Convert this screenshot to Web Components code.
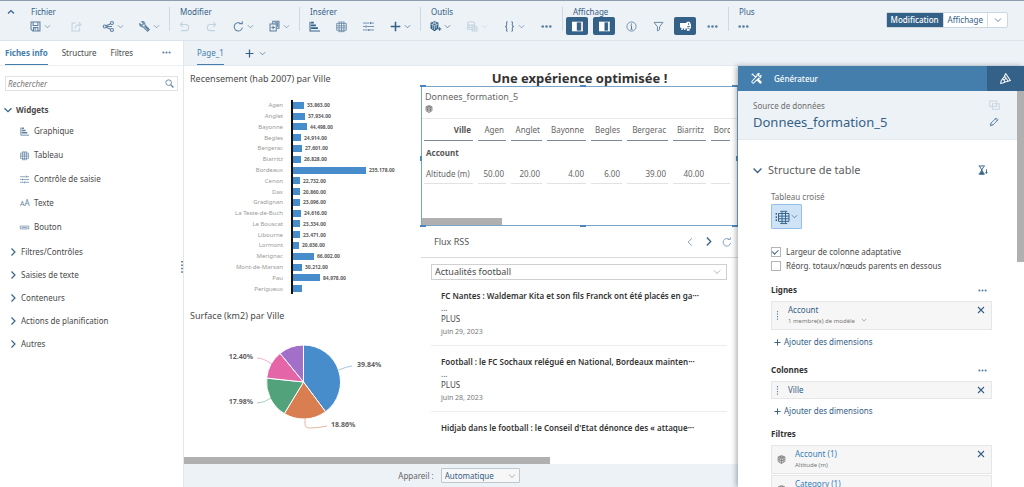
<!DOCTYPE html>
<html lang="fr">
<head>
<meta charset="utf-8">
<title>Page_1</title>
<style>
  :root {
    --blue: #346187; --mid: #5c7f9f; --accent: #437ead; --ink: #4a4a4a; --soft: #6e6e6e;
    --shell: #edf2f7; --line: #dbe4ec; --bar: #b0b0b0;
  }
  html, body { margin: 0; height: 100%; overflow: hidden; }
  body { font: 8px/12px "Noto Sans", "Open Sans", sans-serif; color: var(--ink); background: #fff; }
</style>
</head>
<body>
<app-shell></app-shell>
<script>
const BASE = `*{box-sizing:border-box}
button{font:inherit;color:inherit;background:none;border:0;padding:0;margin:0;cursor:pointer}
h1,h2,h3,p,ul{margin:0;padding:0;list-style:none}
select,input{font:inherit;color:inherit;margin:0}`;

function define(name, css, html, setup) {
  const template = document.createElement('template');
  template.innerHTML = `<style>${BASE}${css}</style>${html}`;
  customElements.define(name, class extends HTMLElement {
    connectedCallback() {
      if (this.shadowRoot) return;
      this.attachShadow({ mode: 'open' }).append(template.content.cloneNode(true));
      if (setup) setup.call(this, this.shadowRoot);
    }
  });
}

/* 16-unit line icons */
const ICONS = {
  down: '<path d="M2 5l6 6 6-6"/>',
  downbold: '<path d="M1 4.500l7 7 7-7" stroke-width="2.300"/>',
  rightbold: '<path d="M5 1l7 7-7 7" stroke-width="2.300"/>',
  up: '<path d="M2 11l6-6 6 6" stroke-width="2.4"/>',
  left: '<path d="M11 2L5 8l6 6"/>',
  save: '<path d="M1.500 1.500h13v13H4l-2.500-2.500zM4.500 1.500v5h7v-5M5 14.500v-5h6.500v5M7.500 10v3"/>',
  export: '<path d="M7 3H1.500v11.500h11V10M6 11c0-4 3-6 8-6M11 1.500L14.500 5 11 8.500"/>',
  share: '<circle cx="2.500" cy="8" r="2.200"/><circle cx="13" cy="3" r="2.200"/><circle cx="13" cy="13" r="2.200"/><path d="M4.500 7L11 4M4.500 9l6.500 3M5 8h8"/>',
  wrench: '<path d="M1 4l3.500 2.500L6.500 4 4 1c3-.5 5 1.500 4.500 4.500L15 12.500 12.500 15 6 8.500C3.500 9 .5 7 1 4zM8 7.500l5.500 5.500"/>',
  undo: '<path d="M2.500 5H10c5.500 0 5.500 9 0 9H3M5.500 1.500L2 5l3.500 3.500"/>',
  redo: '<path d="M13.500 5H6C.5 5 .5 14 6 14h7M10.500 1.500L14 5l-3.500 3.500"/>',
  refresh: '<path d="M13.700 9.500A6 6 0 1 1 11.500 3.800M9 3.800h4.500V.5"/>',
  copy: '<path d="M5.500 3.500v-3h9v10h-3M1.500 4.500h9v10h-9zM6 7v5M3.500 9.500h5M8 2.500h4.500v6"/>',
  chart: '<path d="M1.500 1v13.500H16" /><path fill="currentColor" stroke="none" d="M3 1h4v2.500H3zM3 5h7v2.500H3zM3 9h10v2.500H3z"/>',
  grid: '<path stroke-width="1.100" d="M1 3.500h14v10H1zM1 7h14M1 10h14M4.500 2v13M8 2v13M11.500 2v13M3.500 1.500h9M3.500 15.500h9"/>',
  sliders: '<path stroke-width="1.200" d="M0 3h9M12 3h4M0 8h3M6 8h10M0 13h7M10 13h6"/><path d="M11 1.500v3M4.500 6.500v3M8.500 11.500v3" stroke-width="2"/>',
  plus: '<path d="M8 1v14M1 8h14" stroke-width="2.200"/>',
  cube: '<path stroke-width="1.400" d="M8 1l6 2.500v8L8 15l-6-3.500v-8zM2 3.500L8 6.500l6-3M8 6.500V15M5 2.300l6 2.700v8M11 2.300L5 5v8M2 7.500l6 3 6-3"/>',
  cubeplus: '<path fill="currentColor" d="M6.500 1l5 2v7.500l-5 3.500-5-3.500V3z"/><path stroke="#edf2f7" stroke-width=".9" d="M1.500 4.500l5 2 5-2M6.500 6.500V13M4 2l5 2v7M9 2L4 4v8"/><path d="M14 9v5M11.500 11.500h5"/>',
  database: '<path d="M1 3c0-2.500 10-2.500 10 0v9H1zM1 6h10M1 9h6M7.500 8.500h7v6h-7zM9 11.500h4"/>',
  braces: '<path d="M5.500 1C2.500 1 4 3 4 5s-.5 3-2.500 3c2 0 2.500 1 2.500 3s-1.500 4 1.500 4M10.500 1c3 0 1.500 2 1.500 4s.5 3 2.500 3c-2 0-2.500 1-2.500 3s1.500 4-1.500 4"/>',
  dots: '<g fill="currentColor" stroke="none"><circle cx="2.500" cy="8" r="1.900"/><circle cx="8" cy="8" r="1.900"/><circle cx="13.500" cy="8" r="1.900"/></g>',
  panel1: '<path fill="#fff" stroke="none" d="M0 1h16v14H0z"/><path fill="#346187" stroke="none" d="M7 2h6v12H7z"/><path stroke="#c98d8d" stroke-width="1" d="M14.500 2v12"/>',
  panel2: '<path fill="#fff" stroke="none" d="M0 1h16v14H0z"/><path fill="#346187" stroke="none" d="M8 2h5v12H8z"/><path stroke="#8cb8de" stroke-width="1" d="M15 2v12"/>',
  info: '<circle cx="8" cy="8" r="6.700" stroke-width="1.200"/><path d="M8 7v5M6.500 7H8M6.500 12h3M8 3.700v1.600"/>',
  filter: '<path stroke-width="1.300" d="M1.500 2h13L9.500 8.500v4l-3 2v-6z"/>',
  route: '<path fill="#fff" stroke="none" d="M0 3h9l1-2h4l2 4v6h-2v3h-4v-3H8v2H6v-2H4v2H2v-3L0 9z"/><path stroke="#346187" stroke-width="1.200" d="M12.500 3v3M10.500 8h4M10.500 10.500h3"/>',
  tools: '<path d="M2 1.500l5 5M9.500 9l5 5M1 3l2-2M8.500 9.500l5 5.300 1.500-1.500-5-5M14.500 3.500L12 5l-1.500-1.500L12 1c-2-.5-4 1-3.500 3.500L1.500 12c-1 1.500 1 3.500 2.500 2.500l7.500-7c2 .5 3.500-2 3-4z"/>',
  paint: '<path d="M8.500 1L15 11l-3 1L6.500 4zM7 4.500L4 8l3.500 5L12 12M4 8l-2.500 4L1 15l3-.5L7.500 13M9.500 7L6 10"/>',
  duplicate: '<path d="M1 1.500h10v8H1zM5 5.500h10v8H5z"/>',
  pencil: '<path d="M2 14l1-4L11.500 1.500l3 3L6 13zM10 3l3 3M3 10l3 3"/>',
  hourglass: '<path d="M1 1.500h10M1 14.500h10M2.500 2l3.500 6-3.500 6M9.500 2L6 8l3.500 6M13.500 7v6M12 11.500l1.500 2 1.500-2"/><path fill="currentColor" stroke="none" d="M6 9l4 6H2z"/>',
  crosstab: '<path stroke-width="1.100" d="M4 4h12v9H4zM4 7h12M4 10h12M8 2v13M12 2v13M6 1.500h8M6 15.500h8"/><path stroke-dasharray="2 1.500" d="M1.500 3.500v10"/>',
  button: '<path d="M.5 5.500h15v5H.5zM3 8h10" stroke-width="1.200"/>',
  search: '<circle cx="6.500" cy="6.500" r="5"/><path d="M10 10l5 5" stroke-width="2.200"/>',
  close: '<path d="M2 2l12 12M14 2L2 14" stroke-width="2.200"/>',
  grip: '<g fill="currentColor" stroke="none"><path d="M7 0h2v2H7zM7 4.500h2v2H7zM7 9h2v2H7zM7 13.500h2v2H7z"/></g>'
};

define('ui-icon',
  ':host{display:inline-flex;flex:none}svg{display:block;overflow:visible}',
  '<svg viewBox="0 0 16 16" fill="none" stroke="currentColor" stroke-width="1.5" aria-hidden="true"></svg>',
  function (root) {
    const svg = root.querySelector('svg');
    const size = this.getAttribute('size') || 11;
    svg.setAttribute('width', size);
    svg.setAttribute('height', size);
    svg.innerHTML = ICONS[this.getAttribute('name')];
  });

define('tool-button',
  `:host{display:block;color:var(--mid)}
   button{display:flex;align-items:center;justify-content:center;width:22px;height:18px;border-radius:2px}
   :host([menu]) button{width:31px;gap:3px;padding-left:2px}
   :host([wide]) button{width:32px}
   :host([strong]){color:var(--blue)}
   :host([faint]){color:#c3d2df}
   :host([on]) button{background:var(--blue)}
   .more{display:none}:host([menu]) .more{display:flex}`,
  '<button type="button"><ui-icon></ui-icon><ui-icon class="more" name="down" size="7"></ui-icon></button>',
  function (root) {
    const icon = root.querySelector('ui-icon');
    icon.replaceWith(Object.assign(document.createElement('template'),
      { innerHTML: `<ui-icon name="${this.getAttribute('icon')}"></ui-icon>` }).content);
    root.querySelector('button').setAttribute('aria-label', this.getAttribute('icon'));
  });

define('tool-group',
  `:host{display:flex;flex-direction:column;position:relative;padding:5px 6px 0 3px}
   :host(:not([last]))::after{content:"";position:absolute;right:0;top:6px;bottom:9px;width:1px;background:#cfd9e3}
   h2{font-size:8px;line-height:11px;font-weight:400;color:var(--blue);padding-left:7px}
   .row{display:flex;gap:5px}:host([loose]) .row{gap:6px}`,
  '<h2></h2><div class="row"><slot></slot></div>',
  function (root) { root.querySelector('h2').textContent = this.getAttribute('label'); });

define('app-toolbar',
  `:host{display:flex;height:41px;flex:none;background:var(--shell);border-top:1px solid #8f9db1;border-bottom:1px solid var(--line)}
   .fold{width:21px;height:21px;display:flex;align-items:center;justify-content:center;color:var(--blue)}
   .mode{display:flex;margin:11px 16px auto auto;height:16px;border:1px solid #cdd6de;border-radius:2px;background:#fff;color:var(--blue);font-size:8px;line-height:14px}
   .mode button{padding:0 4px}
   .mode button+button{border-left:1px solid #d5dce3}
   .mode .on{background:var(--blue);color:#fff;font-weight:500}
   .mode .menu{width:20px;display:flex;align-items:center;justify-content:center}`,
  `<button class="fold" type="button" aria-label="Replier"><ui-icon name="up" size="8"></ui-icon></button>
   <tool-group label="Fichier"><tool-button icon="save" menu></tool-button><tool-button icon="export" wide faint></tool-button><tool-button icon="share" menu></tool-button><tool-button icon="wrench" menu></tool-button></tool-group>
   <tool-group label="Modifier"><tool-button icon="undo" faint></tool-button><tool-button icon="redo" faint></tool-button><tool-button icon="refresh" menu></tool-button><tool-button icon="copy" menu></tool-button></tool-group>
   <tool-group label="Insérer"><tool-button icon="chart" strong></tool-button><tool-button icon="grid"></tool-button><tool-button icon="sliders"></tool-button><tool-button icon="plus" menu strong></tool-button></tool-group>
   <tool-group label="Outils" loose><tool-button icon="cubeplus" menu strong></tool-button><tool-button icon="database" menu faint></tool-button><tool-button icon="braces" menu></tool-button><tool-button icon="dots"></tool-button></tool-group>
   <tool-group label="Affichage"><tool-button icon="panel1" on></tool-button><tool-button icon="panel2" on></tool-button><tool-button icon="info"></tool-button><tool-button icon="filter"></tool-button><tool-button icon="route" on></tool-button><tool-button icon="dots"></tool-button></tool-group>
   <tool-group label="Plus" last><tool-button icon="dots"></tool-button></tool-group>
   <div class="mode"><button class="on" type="button">Modification</button><button type="button">Affichage</button><button class="menu" type="button" aria-label="Options"><ui-icon name="down" size="8"></ui-icon></button></div>`);

define('side-panel',
  `:host{display:flex;flex-direction:column;width:184px;flex:none;border-right:1px solid #e3e7eb;position:relative;background:#fff}
   nav{display:flex;gap:14px;height:25px;padding:0 12px 0 5px;border-bottom:1px solid #edf0f3}
   nav button{border-bottom:1px solid transparent}
   nav .on{color:var(--accent);font-weight:700;border-color:var(--accent)}
   nav .more{margin-left:auto;color:var(--mid);display:flex;align-items:center}
   .search{display:flex;align-items:center;margin:10px 5px 0;height:15px;border:1px solid #e2e2e2;padding:0 3px 0 2px;color:var(--mid)}
   input{flex:1;min-width:0;border:0;outline:0;padding:0;background:none;font-style:italic}
   input::placeholder{color:#777;opacity:1}
   .root{display:flex;align-items:center;gap:4px;height:18px;margin-top:10px;padding-left:4px;font-weight:700}
   .root ui-icon,.group ui-icon{color:var(--blue)}
   li button{display:flex;align-items:center;width:100%}
   .leaf{gap:5px;height:24px;padding-left:20px}
   .leaf ui-icon{color:var(--mid)}
   .leaf .aa{width:9px;color:var(--mid);font-size:7px}
   .leaf big{font-size:8px}
   .group{gap:4px;height:23px;padding-left:9px}
   .groups{margin-top:1px}
   .grip{position:absolute;right:-5px;top:220px;color:var(--blue)}`,
  `<nav><button class="on" type="button">Fiches info</button><button type="button">Structure</button><button type="button">Filtres</button><button class="more" type="button" aria-label="Plus"><ui-icon name="dots" size="9"></ui-icon></button></nav>
   <label class="search"><input type="text" placeholder="Rechercher" aria-label="Rechercher"><ui-icon name="search" size="9"></ui-icon></label>
   <button class="root" type="button"><ui-icon name="downbold" size="8"></ui-icon>Widgets</button>
   <ul>
    <li><button class="leaf" type="button"><ui-icon name="chart" size="9"></ui-icon>Graphique</button></li>
    <li><button class="leaf" type="button"><ui-icon name="grid" size="9"></ui-icon>Tableau</button></li>
    <li><button class="leaf" type="button"><ui-icon name="sliders" size="9"></ui-icon>Contrôle de saisie</button></li>
    <li><button class="leaf" type="button"><span class="aa">A<big>A</big></span>Texte</button></li>
    <li><button class="leaf" type="button"><ui-icon name="button" size="9"></ui-icon>Bouton</button></li>
   </ul>
   <ul class="groups">
    <li><button class="group" type="button"><ui-icon name="rightbold" size="8"></ui-icon>Filtres/Contrôles</button></li>
    <li><button class="group" type="button"><ui-icon name="rightbold" size="8"></ui-icon>Saisies de texte</button></li>
    <li><button class="group" type="button"><ui-icon name="rightbold" size="8"></ui-icon>Conteneurs</button></li>
    <li><button class="group" type="button"><ui-icon name="rightbold" size="8"></ui-icon>Actions de planification</button></li>
    <li><button class="group" type="button"><ui-icon name="rightbold" size="8"></ui-icon>Autres</button></li>
   </ul>
   <ui-icon class="grip" name="grip" size="12"></ui-icon>`);

define('page-tabs',
  `:host{display:flex;height:25px;flex:none;background:var(--shell);border-bottom:1px solid #e4eaf0;padding-left:13px;color:var(--accent)}
   .tab{border-bottom:1px solid var(--accent)}
   .add{display:flex;align-items:center;gap:5px;margin-left:21px;color:var(--blue)}`,
  `<button class="tab" type="button">Page_1</button>
   <button class="add" type="button" aria-label="Ajouter une page"><ui-icon name="plus" size="9"></ui-icon><ui-icon name="down" size="7"></ui-icon></button>`);

const POPULATION = [
  ['Agen', 33863], ['Anglet', 37934], ['Bayonne', 44498], ['Begles', 24914], ['Bergerac', 27601],
  ['Biarritz', 26828], ['Bordeaux', 235178], ['Cenon', 22732], ['Dax', 20860], ['Gradignan', 23096],
  ['La Teste-de-Buch', 24616], ['Le Bouscat', 23334], ['Libourne', 23471], ['Lormont', 20636],
  ['Merignac', 66002], ['Mont-de-Marsan', 30212], ['Pau', 84978], ['Perigueux', 29558, true]
];

define('bar-chart',
  `:host{display:block;height:237px;padding:6px 0 0 6px}
   h3{font-size:9px;line-height:13px;font-weight:400}
   .plot{display:grid;grid-template-rows:repeat(18,1fr);height:194px;margin-top:15px;overflow:hidden}
   .row{display:grid;grid-template-columns:93px 1fr;column-gap:8px;font-size:6px;line-height:10px}
   .name{text-align:right;color:#9a9a9a;align-self:center}
   .track{display:flex;align-items:center;gap:3px;border-left:2px solid #111}
   .bar{height:7px;background:#478ccb;flex:none}
   b{color:#5a5a5a;font-size:5px}`,
  '<h3>Recensement (hab 2007) par Ville</h3><div class="plot"></div>',
  function (root) {
    root.querySelector('.plot').innerHTML = POPULATION.map(([name, value, hidden]) =>
      `<div class="row"><span class="name">${name}</span><span class="track"><span class="bar" style="width:${Math.round(value / 3200)}px"></span>${hidden ? '' : `<b>${value.toLocaleString('en-US')}.00</b>`}</span></div>`).join('');
  });

define('pie-chart',
  `:host{display:block;padding:6px 0 0 6px}
   h3{font-size:9px;line-height:13px;font-weight:400}
   svg{display:block;margin:14px 0 0 -6px}
   text{font-size:7px;font-weight:700;fill:#5f5f5f}`,
  `<h3>Surface (km2) par Ville</h3>
   <svg width="236" height="100" viewBox="0 0 236 100" role="img" aria-label="Surface (km2) par Ville">
    <g class="slices" stroke="#fff" stroke-width="1"></g>
    <g fill="none" stroke-width=".8"><path stroke="#8ab4dd" d="M155 34q6-3 13-4"/><path stroke="#e0a587" d="M121 83v5q0 4 5 4 8 0 17-2"/><path stroke="#8cc1a8" d="M87 62q-7 5-14 5"/><path stroke="#ec9cc2" d="M88 28q-9-6-15-6"/></g>
    <text x="173" y="31">39.84%</text><text x="147" y="91">18.86%</text><text x="69" y="68" text-anchor="end">17.98%</text><text x="69" y="23" text-anchor="end">12.40%</text>
   </svg>`,
  function (root) {
    const parts = [[39.84, '#478ccb'], [18.86, '#d87e50'], [17.98, '#52a37c'], [12.4, '#e566a8'], [10.92, '#a26fc9']];
    const point = t => `${(119.5 + 37 * Math.sin(t)).toFixed(2)} ${(46 - 37 * Math.cos(t)).toFixed(2)}`;
    let angle = 0;
    root.querySelector('.slices').innerHTML = parts.map(([share, fill]) => {
      const from = angle;
      angle += share * Math.PI / 50;
      return `<path fill="${fill}" d="M119.5 46L${point(from)}A37 37 0 0 1 ${point(angle)}z"/>`;
    }).join('');
  });

define('data-table',
  `:host{display:block;position:relative;height:140px;border:1px solid #7ba4c8;background:#fff;color:#666}
   h3{font-size:9px;line-height:12px;font-weight:400;padding:4px 0 0 3px}
   .model{display:flex;padding:2px 0 0 3px;height:16px;border-bottom:1px solid #e8e8e8}
   .clip{overflow:hidden;margin-right:7px}
   table{table-layout:fixed;width:338px;border-collapse:separate;border-spacing:5px 0;margin-left:-3px;font-size:8px;line-height:11px}
   th,td{padding:0 2px;text-align:right;font-weight:400;white-space:nowrap}
   thead th{height:22px;border-bottom:1px solid #7d8894}
   thead th:first-child,.account{font-weight:700;color:#555}
   tbody th{text-align:left}
   .account{height:22px}
   tbody tr:last-child>*{height:21px;border-bottom:1px solid #e2e2e2}
   .scroll{position:absolute;left:0;bottom:0;width:80px;height:7px;background:var(--bar)}
   i{position:absolute;width:6px;height:2px;background:#4a86bb}
   .l{left:-2px}.r{right:-1px}.c{left:50%}.t{top:-2px}.b{bottom:-2px}.m{top:50%;width:2px;height:5px}`,
  `<h3>Donnees_formation_5</h3><div class="model"><ui-icon name="cube" size="8"></ui-icon></div>
   <div class="clip"><table>
    <colgroup><col style="width:49px"><col style="width:28px"><col style="width:31px"><col style="width:39px"><col style="width:31px"><col style="width:41px"><col style="width:33px"><col style="width:41px"></colgroup>
    <thead><tr><th>Ville</th><th>Agen</th><th>Anglet</th><th>Bayonne</th><th>Begles</th><th>Bergerac</th><th>Biarritz</th><th>Bordeaux</th></tr></thead>
    <tbody><tr><th class="account" colspan="8">Account</th></tr>
    <tr><th>Altitude (m)</th><td>50.00</td><td>20.00</td><td>4.00</td><td>6.00</td><td>39.00</td><td>40.00</td><td></td></tr></tbody>
   </table></div>
   <div class="scroll"></div>
   <i class="l t"></i><i class="c t"></i><i class="r t"></i><i class="l m"></i><i class="r m"></i><i class="l b"></i><i class="c b"></i><i class="r b"></i>`);

define('feed-item',
  `:host{display:block;height:66px;margin:0 11px 0 10px;padding:10px 0 0 10px;border-bottom:1px solid #ececec}
   :host([brief]){height:auto;border:0}
   h4{margin:0;font-size:8px;line-height:12px;font-weight:600;color:#333;white-space:nowrap}
   p{line-height:11px}
   small{display:block;font-size:7px;line-height:10px;color:#777;margin-top:3px}`,
  '<h4><slot></slot></h4><p>...</p><p>PLUS</p><small></small>',
  function (root) {
    if (this.hasAttribute('brief')) root.querySelectorAll('p,small').forEach(part => part.remove());
    else root.querySelector('small').textContent = this.getAttribute('date');
  });

define('rss-feed',
  `:host{display:block}
   header{display:flex;align-items:center;height:32px;border-bottom:1px solid #d9d9d9;padding:0 6px 0 13px}
   h3{font-size:9px;font-weight:400;margin-right:auto;color:#555}
   header button{display:flex;margin-left:9px;color:var(--blue)}
   header .dim{color:#7d9cb8}
   .pick{display:grid;align-items:center;margin:6px 11px 0 10px;height:16px;border:1px solid #d0d0d0;font-size:9px}
   .pick>*{grid-area:1/1}
   .pick ui-icon{justify-self:end;margin-right:5px;color:#8a9bab;pointer-events:none}
   select{appearance:none;border:0;background:none;padding:0 0 0 3px;height:14px}`,
  `<header><h3>Flux RSS</h3><button class="dim" type="button" aria-label="Précédent"><ui-icon name="left" size="10"></ui-icon></button><button type="button" aria-label="Suivant"><ui-icon name="rightbold" size="9"></ui-icon></button><button class="dim" type="button" aria-label="Actualiser"><ui-icon name="refresh" size="10"></ui-icon></button></header>
   <div class="pick"><select aria-label="Flux"><option>Actualités football</option></select><ui-icon name="down" size="8"></ui-icon></div>
   <feed-item date="juin 29, 2023">FC Nantes : Waldemar Kita et son fils Franck ont été placés en ga···</feed-item>
   <feed-item date="juin 28, 2023">Football : le FC Sochaux relégué en National, Bordeaux mainten···</feed-item>
   <feed-item brief>Hidjab dans le football : le Conseil d'Etat dénonce des « attaque···</feed-item>`);

define('story-canvas',
  `:host{display:flex;flex-direction:column;flex:1;min-width:0;min-height:0;background:#fff}
   .page{flex:1;min-height:0;overflow:hidden;display:grid;grid-template-columns:237px minmax(0,1fr)}
   h1{font-size:13px;line-height:20px;height:20px;padding-top:2px;text-align:center;font-weight:700;color:#333}
   .scroll{height:7px;width:66%;background:var(--bar);flex:none}
   footer{display:flex;align-items:center;justify-content:center;gap:7px;height:23px;flex:none;background:var(--shell);padding-right:4px;color:#666}
   .pick{display:grid;align-items:center;width:79px;height:15px;border:1px solid #bfc7ce;border-radius:1px;background:#f7f7f7;color:var(--blue)}
   .pick>*{grid-area:1/1}
   .pick ui-icon{justify-self:end;margin-right:3px;color:#8a9bab;pointer-events:none}
   select{appearance:none;border:0;background:none;padding:0 0 0 3px;height:13px}`,
  `<div class="page"><div><bar-chart></bar-chart><pie-chart></pie-chart></div>
   <div><h1>Une expérience optimisée !</h1><data-table></data-table><rss-feed></rss-feed></div></div>
   <div class="scroll"></div>
   <footer><label for="device">Appareil :</label><div class="pick"><select id="device"><option>Automatique</option></select><ui-icon name="down" size="8"></ui-icon></div></footer>`);

define('dimension-card',
  `:host{display:flex;align-items:flex-start;border:1px solid #e6e6e6;background:#f6f6f6;padding:2px 6px 2px 2px;color:var(--blue);line-height:12px}
   .lead{align-self:center;display:flex;justify-content:center;width:7px;margin-right:7px;color:var(--mid)}
   :host([filter]) .lead{width:15px;margin-right:6px;color:#777}
   :host([filter]) .text{color:#3580b8}
   :host([tall]){height:29px}
   .text{flex:1}
   button{display:flex;margin-top:2px}`,
  '<span class="lead"></span><div class="text"><slot></slot></div><button type="button" aria-label="Supprimer"><ui-icon name="close" size="8"></ui-icon></button>',
  function (root) {
    root.querySelector('.lead').innerHTML =
      `<ui-icon name="${this.hasAttribute('filter') ? 'cube' : 'grip'}" size="9"></ui-icon>`;
    if (this.hasAttribute('fixed')) root.querySelector('button').remove();
  });

define('builder-panel',
  `:host{display:flex;flex-direction:column;width:286px;flex:none;min-height:0;overflow:hidden;background:#fff;position:relative}
   .bar{display:flex;align-items:center;height:25px;flex:none;background:var(--accent);color:#fff;padding-left:13px;font-size:8px;font-weight:500}
   .bar span{margin:0 auto 0 12px}
   .bar button{width:37px;height:25px;background:var(--blue);display:flex;align-items:center;justify-content:center}
   .source{display:grid;grid-template-columns:1fr auto;align-items:center;height:49px;flex:none;margin-right:7px;padding:8px 17px 7px 15px;background:var(--shell);border-bottom:1px solid #e2e8ee;color:var(--soft);font-size:8px}
   .source h2{font-size:13px;line-height:18px;font-weight:400;color:var(--blue)}
   .source button{color:var(--mid);display:flex}
   .source .dim{color:#cad6e1}
   .body{padding:0 32px 0 33px;font-size:8px}
   .title{display:flex;align-items:center;height:16px;margin:22px 4px 0 -18px;gap:6px;color:var(--blue)}
   .title h2{flex:1;font-size:11px;line-height:16px;font-weight:400;color:#5e5e5e}
   .type{margin-top:13px;color:var(--soft)}
   .kind{display:flex;align-items:center;justify-content:center;gap:2px;width:31px;height:25px;margin-top:1px;background:#cfe3f6;border:1px solid #92c0e8;border-radius:1px;color:var(--blue)}
   .checks{margin-top:16px}
   .checks label{display:flex;align-items:center;gap:5px;height:14px}
   input{appearance:none;width:10px;height:10px;border:1px solid #b5b5b5;background:#fff;display:grid;place-items:center}
   input:checked::before{content:"";width:5px;height:3px;border:solid var(--blue);border-width:0 0 1px 1px;transform:rotate(-45deg) translate(0,-1px)}
   .head{display:flex;justify-content:space-between;align-items:center;height:22px;padding-right:5px;color:var(--mid)}
   .head h3{font-size:8px;color:#333;font-weight:700}
   .head button{display:flex}
   .add{display:flex;align-items:center;gap:3px;height:24px;padding-left:3px;color:var(--blue)}
   small{display:block;font-size:6px;line-height:11px;color:#777}
   small ui-icon{margin-left:4px}
   .lines{margin-top:6px}.cols{margin-top:5px}
   dimension-card+dimension-card{margin-top:1px}
   .scroll{position:absolute;right:0;top:25px;width:7px;height:171px;background:var(--bar)}`,
  `<div class="bar"><ui-icon name="tools" size="11"></ui-icon><span>Générateur</span><button type="button" aria-label="Style"><ui-icon name="paint" size="11"></ui-icon></button></div>
   <div class="source"><span>Source de données</span><button class="dim" type="button" aria-label="Dupliquer"><ui-icon name="duplicate" size="11"></ui-icon></button><h2>Donnees_formation_5</h2><button type="button" aria-label="Modifier"><ui-icon name="pencil" size="10"></ui-icon></button></div>
   <div class="body">
    <div class="title"><ui-icon name="downbold" size="9"></ui-icon><h2>Structure de table</h2><ui-icon name="hourglass" size="10"></ui-icon></div>
    <div class="type">Tableau croisé</div>
    <button class="kind" type="button" aria-label="Tableau croisé"><ui-icon name="crosstab" size="14"></ui-icon><ui-icon name="down" size="7"></ui-icon></button>
    <div class="checks"><label><input type="checkbox" checked>Largeur de colonne adaptative</label><label><input type="checkbox">Réorg. totaux/nœuds parents en dessous</label></div>
    <div class="head lines"><h3>Lignes</h3><button type="button" aria-label="Plus"><ui-icon name="dots" size="9"></ui-icon></button></div>
    <dimension-card tall>Account<small>1 membre(s) de modèle <ui-icon name="down" size="6"></ui-icon></small></dimension-card>
    <button class="add" type="button"><ui-icon name="plus" size="7"></ui-icon>Ajouter des dimensions</button>
    <div class="head cols"><h3>Colonnes</h3><button type="button" aria-label="Plus"><ui-icon name="dots" size="9"></ui-icon></button></div>
    <dimension-card>Ville</dimension-card>
    <button class="add" type="button"><ui-icon name="plus" size="7"></ui-icon>Ajouter des dimensions</button>
    <div class="head"><h3>Filtres</h3></div>
    <dimension-card filter tall>Account (1)<small>Altitude (m)</small></dimension-card>
    <dimension-card filter tall fixed>Category (1)</dimension-card>
   </div><div class="scroll"></div>`);

define('app-shell',
  `:host{display:flex;flex-direction:column;height:100vh}
   .main{display:flex;flex:1;min-height:0}
   .work{display:flex;flex-direction:column;flex:1;min-width:0}
   .stage{display:flex;flex:1;min-height:0}
   builder-panel{box-shadow:-2px 0 5px rgba(60,70,80,.4)}`,
  `<app-toolbar></app-toolbar><div class="main"><side-panel></side-panel>
   <div class="work"><page-tabs></page-tabs><div class="stage"><story-canvas></story-canvas><builder-panel></builder-panel></div></div></div>`);
</script>
</body>
</html>
